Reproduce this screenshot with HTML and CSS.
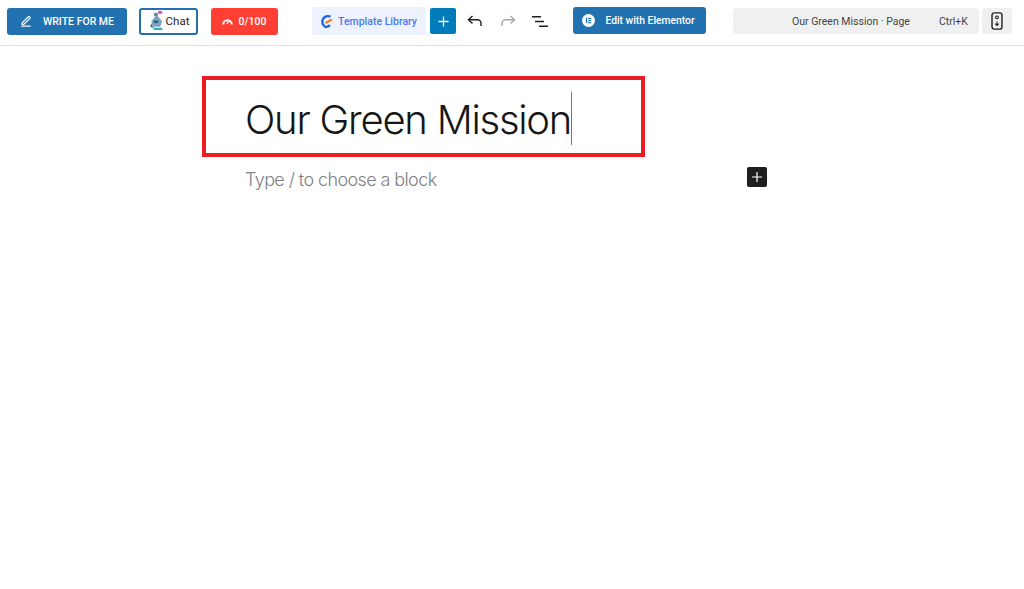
FILE: index.html
```html
<!DOCTYPE html>
<html lang="en">
<head>
<meta charset="utf-8">
<title>Our Green Mission</title>
<link rel="stylesheet" href="styles.css">
</head>
<body>
<header class="toolbar">
  <button class="btn write">
    <svg width="12" height="12" viewBox="0 0 14 14" fill="none" stroke="#fff" stroke-width="1.400"><path d="M2.500 9.200 9.400 2.300a1.300 1.300 0 0 1 1.900 0 1.300 1.300 0 0 1 0 1.900L4.400 11H2.500z"/><path d="M1.500 13h11"/></svg>
    <span>WRITE FOR ME</span>
  </button>
  <button class="btn chat">
    <svg width="16" height="22" viewBox="0 0 15 21"><ellipse cx="10.500" cy="2.200" rx="2.200" ry="1.500" fill="#e23fd0"/><circle cx="6.500" cy="4.500" r="2" fill="#5e8fa8"/><path d="M6 6 2 11l1.500 5h7l2-5-4-5z" fill="#7ba6bd"/><path d="M2 13l-1 3 3 1zM4.500 10h4v2.500h-4z" fill="#2f5f7c"/><path d="M3 17h9l1 2H5z" fill="#3aa6c9"/></svg>
    <span>Chat</span>
  </button>
  <button class="btn score">
    <svg width="11" height="7" viewBox="0 0 11 7" fill="none" stroke="#fff" stroke-width="2"><path d="M1.200 6.500a4.300 4.300 0 0 1 8.600 0"/><path d="M5 6l2-3" stroke-width="1.300"/></svg>
    <span>0/100</span>
  </button>
  <button class="btn library">
    <svg width="13" height="15" viewBox="0 0 13 14" fill="none"><path d="M10.500 2.200A5.500 5.500 0 1 0 5.500 12.500c2 0 3.500-.7 4.500-2" stroke="#1f66e5" stroke-width="2.400"/><path d="M5.500 8.500 12 5" stroke="#f08030" stroke-width="2.400"/></svg>
    <span>Template Library</span>
  </button>
  <button class="btn plus" aria-label="Add block">
    <svg width="11" height="11" viewBox="0 0 12 12" stroke="#fff" stroke-width="1.400"><path d="M6 .5v11M.5 6h11"/></svg>
  </button>
  <button class="icon undo" aria-label="Undo">
    <svg width="16" height="12" viewBox="0 0 16 12" fill="none" stroke="#1e1e1e" stroke-width="1.400"><path d="M5.500 1 1.500 4.800l4 3.800"/><path d="M1.500 4.800h9a3.500 3.500 0 0 1 3.500 3.500V11"/></svg>
  </button>
  <button class="icon redo" aria-label="Redo">
    <svg width="16" height="12" viewBox="0 0 16 12" fill="none" stroke="#a8a8a8" stroke-width="1.400"><path d="M10.500 1l4 3.800-4 3.800"/><path d="M14.500 4.800h-9A3.500 3.500 0 0 0 2 8.300V11"/></svg>
  </button>
  <button class="icon list" aria-label="Document overview">
    <svg width="16" height="11" viewBox="0 0 16 11" stroke="#1e1e1e" stroke-width="1.400"><path d="M0 .8h9M3 5.500h9M7 10.200h9"/></svg>
  </button>
  <button class="btn elementor">
    <svg width="13" height="13" viewBox="0 0 13 13"><circle cx="6.500" cy="6.500" r="6.500" fill="#fff"/><path d="M4 3.800h1.200v5.400H4zM6.200 3.800h3v1.100h-3zM6.200 5.950h3v1.100h-3zM6.200 8.100h3v1.100h-3z" fill="#2271b1"/></svg>
    <span>Edit with Elementor</span>
  </button>
  <div class="search">
    <span class="search-title">Our Green Mission · Page</span>
    <span class="search-key">Ctrl+K</span>
  </div>
  <button class="device" aria-label="Preview">
    <svg width="12" height="18" viewBox="0 0 11 17" fill="none"><rect x=".8" y=".8" width="9.400" height="15.400" rx="2" stroke="#1e1e1e" stroke-width="1.300"/><circle cx="5.500" cy="5" r="1.300" stroke="#1e1e1e"/><path d="M5.500 9v3.500M3.800 11l1.700 1.800L7.200 11" stroke="#1e1e1e"/></svg>
  </button>
</header>
<main class="canvas">
  <div class="title-box">
    <h1 class="title">Our Green Mission</h1>
    <span class="caret"></span>
  </div>
  <div class="block-row">
    <p class="placeholder">Type / to choose a block</p>
    <button class="block-add" aria-label="Add block">
      <svg width="10" height="10" viewBox="0 0 10 10" stroke="#fff" stroke-width="1.200"><path d="M5 0v10M0 5h10"/></svg>
    </button>
  </div>
</main>
</body>
</html>
```
FILE: styles.css
```css
* { box-sizing: border-box; }
html, body { margin: 0; padding: 0; height: 100%; background: #fff; overflow: hidden; }
body { font-family: Roboto, "Noto Sans", sans-serif; color: #1e1e1e; }
button { font: inherit; border: 0; padding: 0; background: none; display: flex; align-items: center; justify-content: center; white-space: nowrap; }

.toolbar { height: 46px; display: flex; align-items: center; border-bottom: 1px solid #e0e0e0; padding: 0 0 3px 7px; }
.btn { height: 27px; border-radius: 3px; font-size: 10.500px; font-weight: 500; }
.write { width: 120px; background: #2271b1; color: #fff; gap: 11px; font-weight: 500; }
.chat { width: 59px; margin-left: 12px; background: #fff; border: 2px solid #2271b1; color: #1e1e1e; gap: 1px; font-size: 11.500px; font-weight: 400; padding-left: 1px; }
.score { width: 67px; margin-left: 13px; background: #ff3f33; color: #fff; gap: 6px; padding-right: 1px; }
.library { width: 114px; height: 28px; margin-left: 34px; background: #edf2fe; color: #4a78f0; gap: 5px; border-radius: 2px; padding-right: 1px; font-weight: 500; font-size: 10.500px; }
.plus { width: 26px; height: 26px; margin-left: 4px; background: #007cba; border-radius: 2px; }
.icon { width: 16px; height: 16px; }
.undo { margin-left: 11px; }
.redo { margin-left: 17px; }
.list { margin-left: 16px; }
.elementor { width: 133px; margin-left: 25px; margin-bottom: 1px; background: #2271b1; color: #fff; gap: 10px; font-weight: 500; font-size: 10.300px; padding-right: 2px; }
.search { width: 246px; height: 26px; margin-left: 27px; background: #f0f0f0; border-radius: 4px; display: flex; align-items: center; font-size: 10.500px; color: #444; padding-left: 59px; white-space: nowrap; }
.search-key { margin-left: 29px; }
.device { width: 30px; height: 26px; margin-left: 3px; background: #f0f0f0; border-radius: 4px; }

.canvas { padding-left: 202px; padding-top: 30px; }
.title-box { width: 443px; height: 81px; border: 4px solid #ea1c24; padding: 16px 0 0 39px; display: flex; }
.title { margin: 0; font-family: Inter, sans-serif; font-size: 40px; font-weight: 300; line-height: 48px; letter-spacing: -1.250px; color: #161616; white-space: nowrap; }
.caret { width: 1px; height: 53px; margin-top: -4px; background: #777; }
.block-row { width: 565px; padding: 11px 0 0 43px; display: flex; justify-content: space-between; }
.placeholder { margin: 0; font-family: Inter, sans-serif; font-size: 18px; font-weight: 300; line-height: 24px; letter-spacing: -0.600px; color: #808080; }
.block-add { width: 20px; height: 20px; margin-top: -1px; background: #1e1e1e; border-radius: 2px; }
```
